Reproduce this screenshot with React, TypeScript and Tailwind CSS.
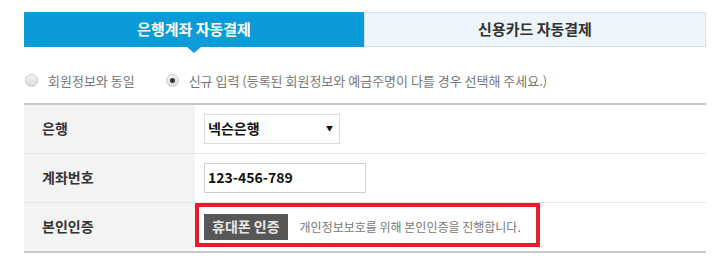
const font = { fontFamily: '"Noto Sans CJK KR", "Noto Sans", sans-serif' };

function Radio({ checked }: { checked?: boolean }) {
  return (
    <span className="flex h-[13px] w-[13px] items-center justify-center rounded-full border border-[#c8c8c8] bg-gradient-to-b from-[#f4f4f4] to-[#dcdcdc]">
      {checked && <span className="h-[5px] w-[5px] rounded-full bg-[#333]" />}
    </span>
  );
}

export default function App() {
  return (
    <div className="h-[264px] w-[720px] bg-white text-[#333]" style={font}>
      <div className="ml-[24px] w-[682px] pt-[12px]">
        {/* tabs */}
        <div className="flex h-[35px]">
          <div className="relative flex flex-1 items-center justify-center bg-[#0b9bd9] text-[15px] font-bold text-white">
            은행계좌 자동결제
            <span className="absolute -bottom-[6px] left-1/2 h-0 w-0 -translate-x-1/2 border-x-[7px] border-t-[6px] border-x-transparent border-t-[#0b9bd9]" />
          </div>
          <div className="flex flex-1 items-center justify-center border border-[#d6e1ea] bg-[#edf4fa] text-[15px] font-bold text-[#333]">
            신용카드 자동결제
          </div>
        </div>

        {/* radio options */}
        <div className="mt-[24px] flex items-center text-[13px] text-[#777]">
          <label className="flex items-center gap-[10px] pl-[1px]">
            <Radio />
            회원정보와 동일
          </label>
          <label className="ml-[31px] flex items-center gap-[10px]">
            <Radio checked />
            신규 입력 (등록된 회원정보와 예금주명이 다를 경우 선택해 주세요.)
          </label>
        </div>

        {/* form table */}
        <div className="mt-[12px] border-y-2 border-[#c9c9c9] text-[14px]">
          <div className="flex h-[49px] border-b border-[#e6e6e6]">
            <div className="flex w-[171px] items-center bg-[#f3f3f3] pl-[18px] font-bold">은행</div>
            <div className="flex items-center pl-[9px]">
              <div className="flex h-[30px] w-[136px] items-center justify-between border border-[#dcdcdc] bg-white pl-[3px] pr-[6px] text-[14px] font-bold text-[#111]">
                넥슨은행
                <span className="text-[7px]">▼</span>
              </div>
            </div>
          </div>
          <div className="flex h-[49px] border-b border-[#e6e6e6]">
            <div className="flex w-[171px] items-center bg-[#f3f3f3] pl-[18px] font-bold">계좌번호</div>
            <div className="flex items-center pl-[9px]">
              <div className="flex h-[30px] w-[162px] items-center border border-[#cfcfcf] bg-white pl-[3px] text-[14px] font-bold text-[#111]">
                123-456-789
              </div>
            </div>
          </div>
          <div className="flex h-[48px]">
            <div className="flex w-[171px] items-center bg-[#f3f3f3] pl-[18px] font-bold">본인인증</div>
            <div className="relative flex flex-1 items-center pl-[9px]">
              <div className="flex h-[26px] items-center bg-[#575757] px-[8px] text-[14px] font-bold text-[#e8e8e8]">
                휴대폰 인증
              </div>
              <span className="ml-[12px] text-[12px] text-[#777]">개인정보보호를 위해 본인인증을 진행합니다.</span>
              <div className="pointer-events-none absolute left-0 top-0 h-[44px] w-[345px] border-[4px] border-[#e3202a]" />
            </div>
          </div>
        </div>
      </div>
    </div>
  );
}
